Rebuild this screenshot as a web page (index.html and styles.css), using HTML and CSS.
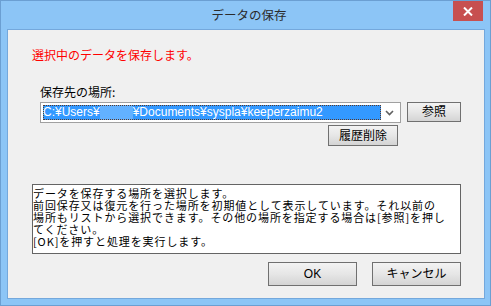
FILE: index.html
```html
<!DOCTYPE html>
<html lang="ja">
<head>
    <meta charset="UTF-8">
    <title>データの保存</title>
    <link rel="stylesheet" href="styles.css">
</head>
<body>
    <div class="window">
        <div class="titlebar">
            <span></span>
            <div class="title">データの保存</div>
            <div class="close-button">
                <svg width="10" height="9" viewBox="0 0 10 9"><path d="M1 0.5 L9 8.5 M9 0.5 L1 8.5" stroke="#fff" stroke-width="2"/></svg>
            </div>
        </div>
        <div class="client">
            <div class="message">選択中のデータを保存します。</div>
            <div class="field-label">保存先の場所:</div>
            <div class="path-row">
                <div class="combo">
                    <div class="combo-value"><span>C:¥Users¥</span><span class="masked"></span><span>¥Documents¥syspla¥keeperzaimu2</span></div>
                    <div class="combo-arrow">
                        <svg width="9" height="6" viewBox="0 0 9 6"><path d="M1 1 L4.5 4.5 L8 1" stroke="#606060" stroke-width="1.6" fill="none"/></svg>
                    </div>
                </div>
                <button class="button browse-button">参照</button>
            </div>
            <div class="history-row">
                <button class="button history-button">履歴削除</button>
            </div>
            <div class="help-box">
                <div class="help-line">データを保存する場所を選択します。</div>
                <div class="help-line">前回保存又は復元を行った場所を初期値として表示しています。それ以前の</div>
                <div class="help-line">場所もリストから選択できます。その他の場所を指定する場合は[参照]を押し</div>
                <div class="help-line">てください。</div>
                <div class="help-line">[OK]を押すと処理を実行します。</div>
            </div>
            <div class="dialog-buttons">
                <button class="button dialog-button">OK</button>
                <button class="button dialog-button">キャンセル</button>
            </div>
        </div>
    </div>
</body>
</html>
```

FILE: styles.css
```css
body {
    margin: 0;
    padding: 0;
    font-family: "Noto Sans CJK JP", "Liberation Sans", sans-serif;
    font-size: 12px;
    color: #000;
}
.window {
    width: 491px;
    height: 306px;
    box-sizing: border-box;
    border: 1px solid #6b9fd2;
    background: #8cc5f6;
    padding: 0 5px 6px 6px;
    display: flex;
    flex-direction: column;
}
.titlebar {
    height: 28px;
    display: grid;
    grid-template-columns: 1fr auto 1fr;
    align-items: start;
}
.title {
    font-size: 12.5px;
    color: #2b2b2b;
    line-height: 28px;
    padding-left: 6px;
}
.close-button {
    justify-self: end;
    width: 30px;
    height: 20px;
    margin-right: 2px;
    background: #c75050;
    display: flex;
    align-items: center;
    justify-content: center;
}
.client {
    flex: 1;
    background: #f0f0f0;
    border: 1px solid #74a8dc;
    padding: 0 23px 0 24px;
}
.message {
    color: #ff0000;
    margin-top: 18px;
    line-height: 14px;
}
.field-label {
    margin-top: 23px;
    margin-left: 8px;
    line-height: 14px;
}
.path-row {
    display: flex;
    align-items: flex-start;
    margin-top: 3px;
    margin-left: 8px;
}
.combo {
    width: 362px;
    height: 21px;
    box-sizing: border-box;
    border: 1px solid #a0a0a0;
    background: #fff;
    display: flex;
    align-items: center;
    padding: 2px;
}
.combo-value {
    flex: 1;
    height: 15px;
    box-sizing: border-box;
    background: #3399ff;
    color: #fff;
    font-family: "Liberation Sans", sans-serif;
    font-size: 12px;
    line-height: 14px;
    outline: 1px dotted #5a3a2a;
    outline-offset: -1px;
    display: flex;
    white-space: nowrap;
    overflow: hidden;
}
.masked {
    width: 33px;
    background: #62b1ff;
}
.combo-arrow {
    width: 17px;
    display: flex;
    justify-content: center;
}
.button {
    font-family: "Liberation Sans", "Noto Sans CJK JP", sans-serif;
    font-size: 12px;
    font-weight: normal;
    color: #000;
    padding: 0;
    border: 1px solid #707070;
    border-radius: 0;
    background: linear-gradient(#f3f3f3, #e6e6e6 50%, #d4d4d4);
    line-height: 16px;
}
.browse-button {
    width: 54px;
    height: 20px;
    margin-left: 6px;
}
.history-row {
    display: flex;
    margin-top: 2px;
    padding-left: 296px;
}
.history-button {
    width: 70px;
    height: 21px;
}
.help-box {
    margin-top: 38px;
    height: 70px;
    box-sizing: border-box;
    border: 1px solid #646464;
    background: #fff;
    padding: 2px 0 0 0;
}
.help-line {
    font-size: 11px;
    letter-spacing: 0.9px;
    line-height: 12px;
    height: 12px;
    white-space: nowrap;
}
.dialog-buttons {
    display: flex;
    justify-content: flex-end;
    gap: 15px;
    margin-top: 8px;
}
.dialog-button {
    width: 89px;
    height: 24px;
}
```
